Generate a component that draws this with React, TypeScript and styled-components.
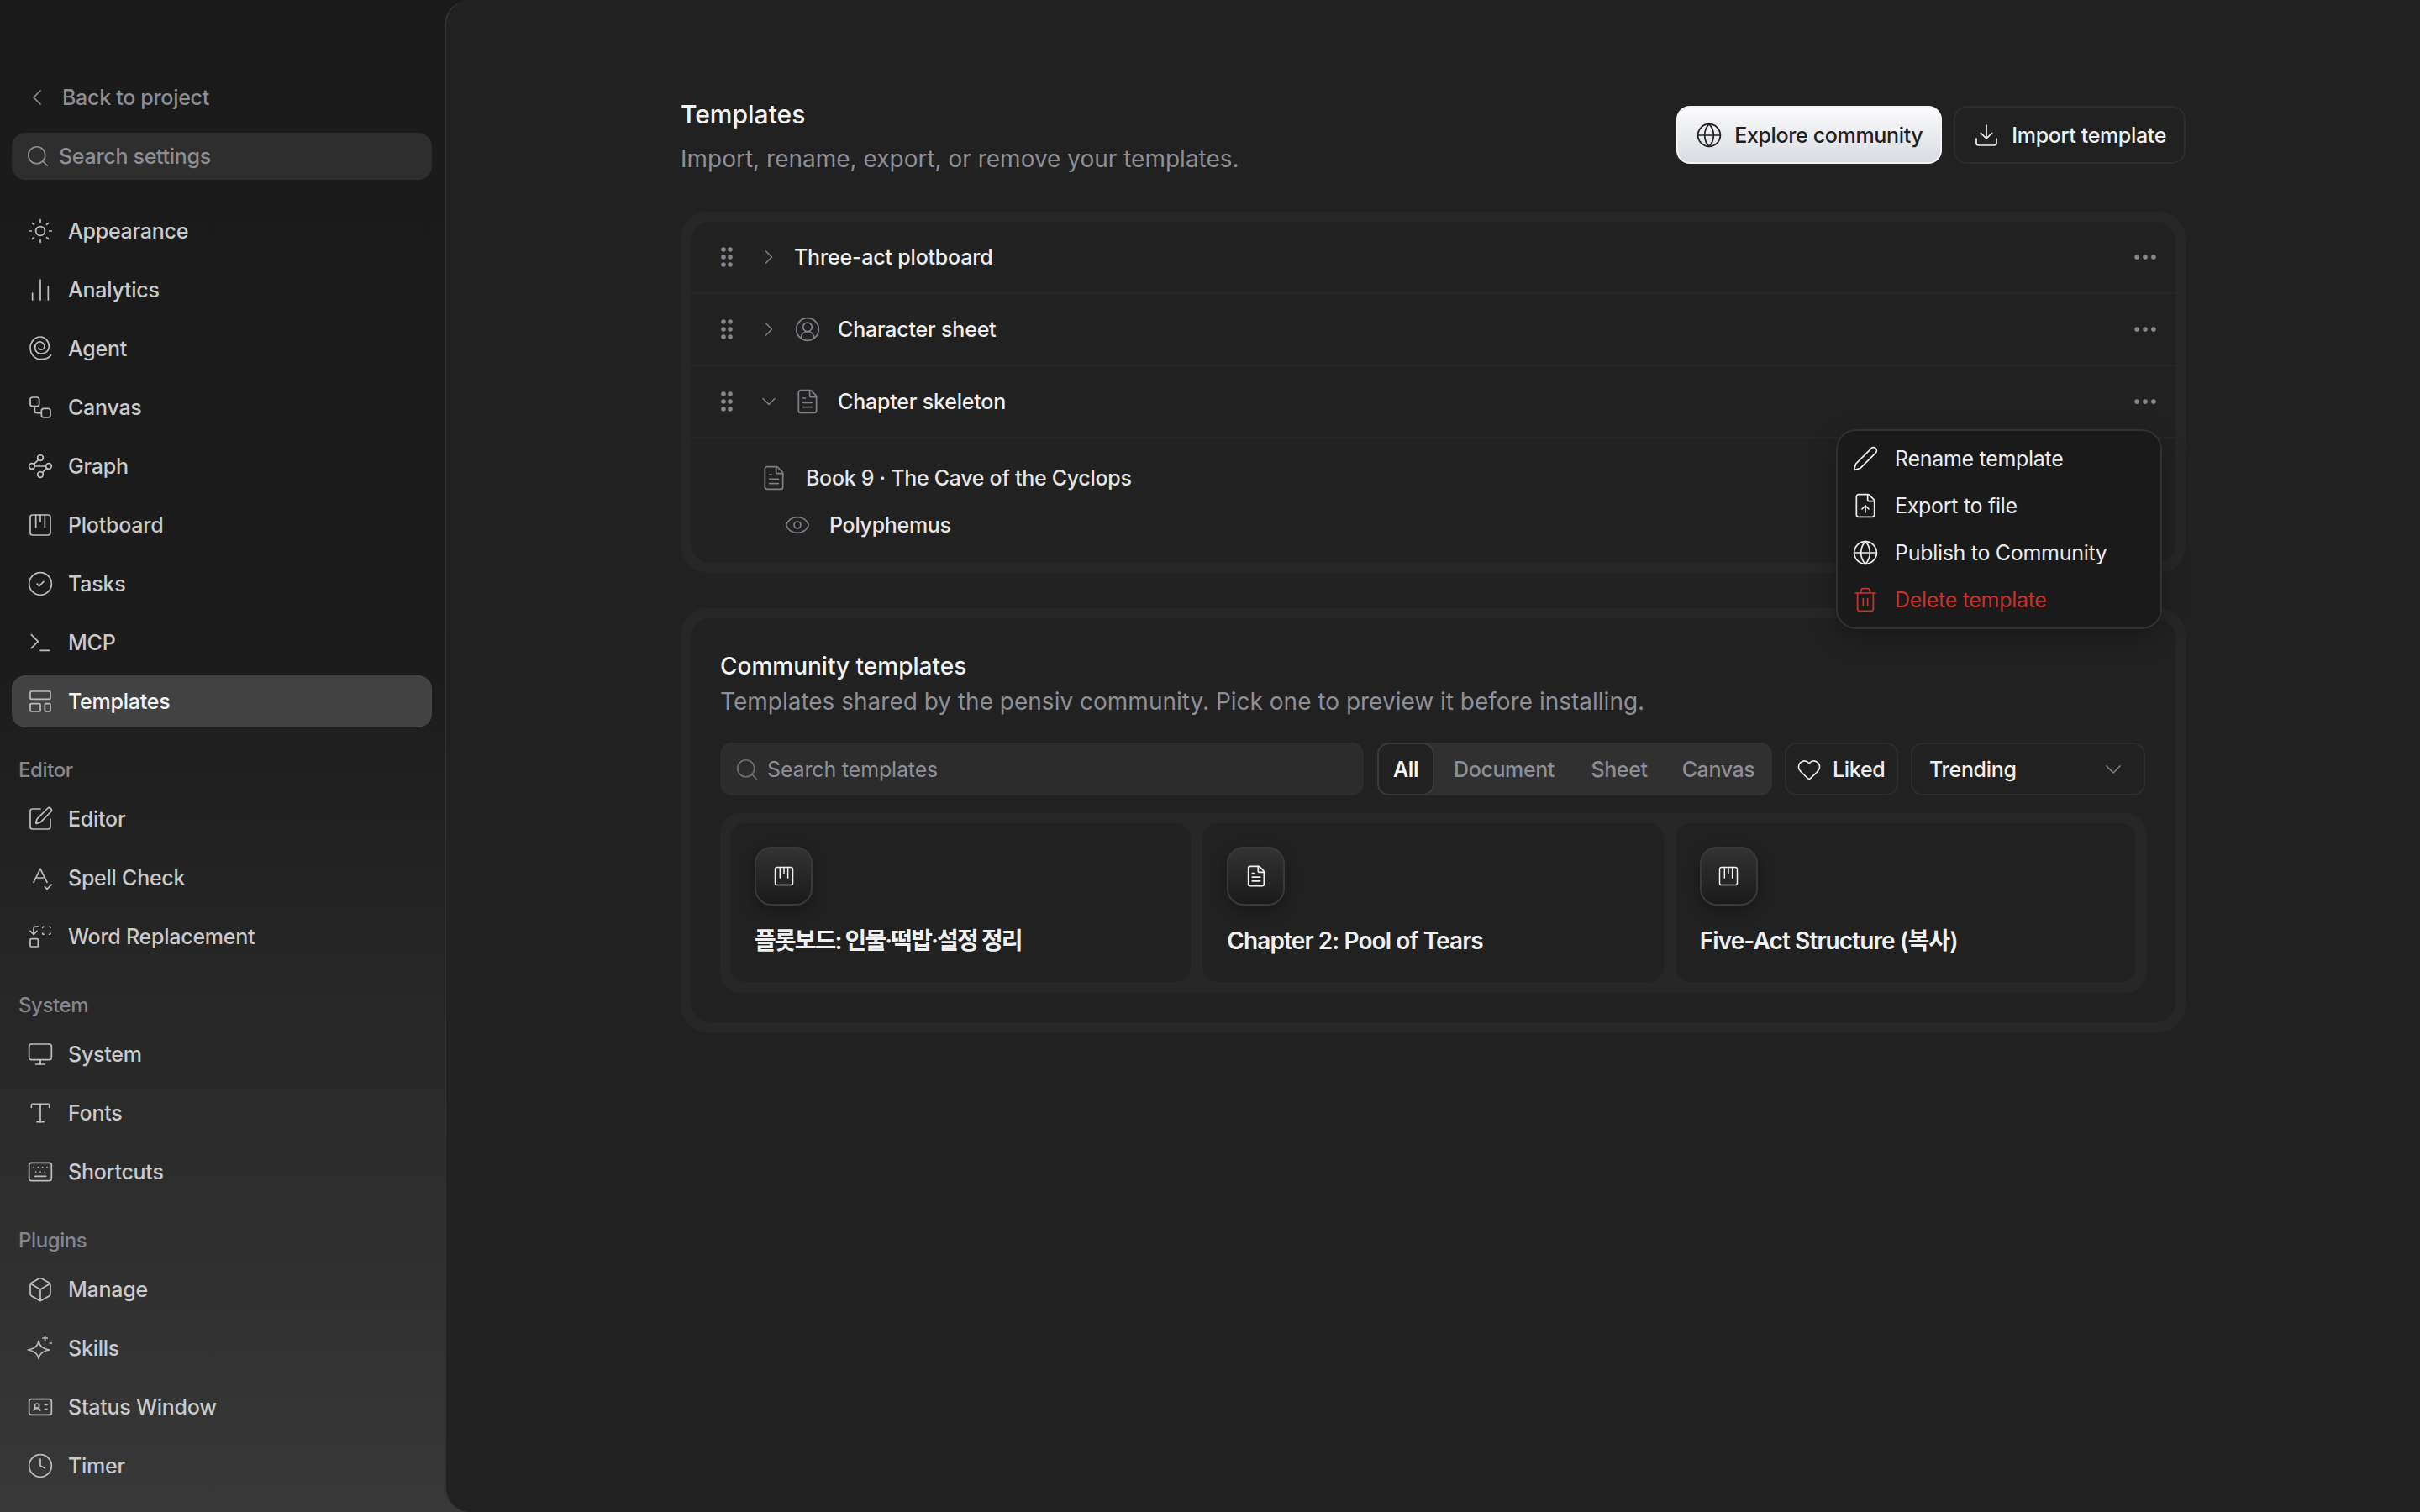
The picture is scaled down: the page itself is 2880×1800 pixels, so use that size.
import React from "react";
import styled, { createGlobalStyle } from "styled-components";
import {
  Sun, ChartNoAxesColumn, Workflow, Waypoints, CircleCheck, Terminal, LayoutTemplate, SquarePen, SpellCheck, Replace,
  Monitor, Type, Keyboard, Box, IdCard, Clock, ChevronLeft, Search, ChevronRight, ChevronDown, CircleUserRound,
  FileText, Eye, Ellipsis, Pen, FileUp, Globe, Trash2, Download, Heart, Bell,
} from "lucide-react";

const Global = createGlobalStyle`
  html, body { margin: 0; padding: 0; background: #212121; }
  body { font-family: Inter, "Noto Sans CJK KR", sans-serif; }
  * { box-sizing: border-box; }
`;

const Page = styled.div`
  width: 2880px; height: 1800px; display: flex; overflow: hidden;
  background: linear-gradient(180deg, #1a1a1a 0%, #1c1c1c 45%, #383838 100%);
`;
const Sidebar = styled.aside`
  width: 529px; flex: none; padding: 88px 15px 0 14px; display: flex; flex-direction: column; overflow: hidden;
  & > * { flex: none; }
`;
const BackRow = styled.div`
  height: 56px; display: flex; align-items: center; gap: 14px; padding-left: 14px; color: #8d8d95; font-size: 25px; font-weight: 500; letter-spacing: -0.3px;
`;
const SearchBox = styled.div`
  height: 56px; margin-top: 14px; border-radius: 16px; background: #2e2e2e; display: flex; align-items: center; gap: 10px;
  padding-left: 16px; color: #8d8d95; font-size: 25px; font-weight: 500; letter-spacing: -0.3px;
`;
const NavList = styled.div`
  display: flex; flex-direction: column; gap: 8px;
`;
const NavTop = styled(NavList)` margin-top: 30px; `;
const SectionLabel = styled.div`
  height: 32px; line-height: 32px; margin: 35px 0 11px 8px; color: #85858d; font-size: 24px; font-weight: 500; letter-spacing: -0.4px;
`;
const NavItem = styled.div<{ $active?: boolean }>`
  height: 62px; flex: none; border-radius: 16px; display: flex; align-items: center; gap: 17px; padding-left: 18px;
  font-size: 25px; font-weight: 500; letter-spacing: -0.25px;
  color: ${(p) => (p.$active ? "#f4f4f4" : "#cacaca")};
  background: ${(p) => (p.$active ? "#424242" : "transparent")};
  svg { color: #bdbdbd; flex: none; }
`;
const Main = styled.main`
  flex: 1; background: #212121; border-left: 2px solid #323238; border-radius: 30px 0 0 30px; padding: 116px 279px 0 279px; min-width: 0;
`;
const Header = styled.header`
  display: flex; justify-content: space-between; align-items: flex-start; height: 136px;
`;
const Title = styled.h1`
  margin: 0; font-size: 30px; line-height: 40px; font-weight: 500; color: #f4f4f4;
`;
const Sub = styled.p`
  margin: 13px 0 0; font-size: 28px; line-height: 40px; font-weight: 400; color: #8e8e96;
`;
const Actions = styled.div`
  display: flex; gap: 14px; margin-top: 10px;
`;
const Button = styled.div<{ $primary?: boolean }>`
  height: 69px; border-radius: 16px; display: flex; align-items: center; gap: 14px; padding: 0 21px; font-size: 25px; font-weight: 500; letter-spacing: -0.35px;
  color: ${(p) => (p.$primary ? "#1f1f24" : "#f0f0f0")};
  background: ${(p) => (p.$primary ? "linear-gradient(180deg, #fbfbfd 0%, #d9dce1 100%)" : "transparent")};
  border: 2px solid ${(p) => (p.$primary ? "#f4f4f6" : "#2b2b30")};
`;
const Shell = styled.section<{ $top?: number }>`
  position: relative; background: #262626; border-radius: 32px; padding: 12px; margin-top: ${(p) => p.$top ?? 0}px;
`;
const Inner = styled.div`
  background: #212121; border-radius: 24px;
`;
const Row = styled.div`
  height: 86px; display: flex; align-items: center; padding: 0 19px 0 36px; border-bottom: 2px solid #262626; color: #efefef; font-size: 25px; font-weight: 500; letter-spacing: -0.2px;
`;
const Grip = styled.svg` width: 14px; height: 24px; flex: none; color: #85858d; margin-right: 29px; `;
const RowChevron = styled.span`
  width: 28px; display: flex; justify-content: center; color: #7f7f87; flex: none; margin-right: 16px;
`;
const RowIcon = styled.span`
  width: 32px; display: flex; justify-content: center; color: #7f7f87; flex: none; margin-right: 20px;
`;
const RowMore = styled.span`
  margin-left: auto; color: #85858d; display: flex;
`;
const Nested = styled.div`
  padding: 19px 0 17px 83px; color: #e6e6e6; font-size: 25px; font-weight: 500; letter-spacing: -0.3px;
`;
const NestedRow = styled.div<{ $indent?: number }>`
  height: 56px; display: flex; align-items: center; gap: 22px; padding-left: ${(p) => p.$indent ?? 0}px;
  svg { color: #7f7f87; flex: none; }
`;
const Menu = styled.div`
  position: absolute; top: 259px; right: 28px; width: 388px; height: 238px; padding: 5px 0; border-radius: 24px; background: #1a1a1a;
  border: 2px solid #303030; box-shadow: 0 10px 30px rgba(0,0,0,.25); z-index: 5;
`;
const MenuItem = styled.div<{ $danger?: boolean }>`
  height: 56px; display: flex; align-items: center; gap: 19px; padding-left: 17px; font-size: 25px; font-weight: 400; letter-spacing: -0.3px;
  color: ${(p) => (p.$danger ? "#c4332d" : "#ececec")};
`;
const CommunityInner = styled(Inner)`
  padding: 37px 35px 35px;
`;
const CTitle = styled.h2`
  margin: 0; font-size: 28px; line-height: 40px; font-weight: 500; color: #f4f4f4;
`;
const CSub = styled.p`
  margin: 2px 0 0; font-size: 28px; line-height: 40px; color: #8e8e96;
`;
const Toolbar = styled.div`
  display: flex; margin-top: 29px; height: 63px; & > * { flex: none; }
`;
const TplSearch = styled.div`
  width: 766px; border-radius: 14px; background: #2c2c2c; display: flex; align-items: center; gap: 9px; padding-left: 17px;
  color: #8e8e96; font-size: 25px; letter-spacing: -0.15px; svg { color: #6e6e74; }
`;
const Segments = styled.div`
  margin-left: 16px; width: 470px; border-radius: 14px; background: #303030; display: flex; align-items: center; font-size: 25px; font-weight: 500; letter-spacing: -0.4px; color: #8e8e96;
`;
const Segment = styled.div<{ $on?: boolean; $w: number }>`
  width: ${(p) => p.$w}px; height: 100%; display: flex; align-items: center; justify-content: center; border-radius: 14px;
  ${(p) => p.$on && "background: #212121; color: #f4f4f4; border: 2px solid #383838; font-weight: 600;"}
`;
const OutlineBtn = styled.div`
  margin-left: 15px; height: 63px; width: 135px; border: 2px solid #2b2b30; border-radius: 14px; display: flex; align-items: center; gap: 13px; padding: 0 0 0 12px;
  color: #efefef; font-size: 25px; font-weight: 500; letter-spacing: -0.3px;
`;
const Select = styled(OutlineBtn)`
  width: 279px; justify-content: space-between; padding: 0 20px 0 20px; svg { color: #7f7f87; }
`;
const CardGrid = styled.div`
  margin-top: 21px; background: #262626; border-radius: 24px; padding: 12px 12px 13px; display: grid; grid-template-columns: repeat(3, 1fr); gap: 14px;
`;
const Card = styled.div`
  height: 189px; border-radius: 18px; background: #212121; padding: 28px 29px;
`;
const CardIcon = styled.div`
  width: 69px; height: 70px; border-radius: 20px; display: flex; align-items: center; justify-content: center; color: #f0f0f0;
  background: linear-gradient(180deg, #333 0%, #1a1a1a 100%); border: 2px solid #383838; box-shadow: 0 6px 18px rgba(0,0,0,.3);
`;
const CardTitle = styled.div<{ $ls: number }>`
  margin-top: 22px; line-height: 40px; font-size: 28px; font-weight: 600; color: #f0f0f0; white-space: nowrap; letter-spacing: ${(p) => p.$ls}px;
`;

const GripIcon = () => (
  <Grip viewBox="0 0 14 24" fill="currentColor">
    {[3, 12, 21].map((y) => (
      <React.Fragment key={y}>
        <circle cx="3" cy={y} r="2.8" />
        <circle cx="11" cy={y} r="2.8" />
      </React.Fragment>
    ))}
  </Grip>
);
const PlotIcon = ({ size = 32 }: { size?: number }) => (
  <svg width={size} height={size} viewBox="0 0 24 24" fill="none" stroke="currentColor" strokeWidth="1.3" strokeLinecap="round">
    <rect x="3" y="3" width="18" height="18" rx="2" />
    <path d="M8 3v11M12 3v6M16 3v11" />
  </svg>
);
const SpiralIcon = ({ size = 32 }: { size?: number }) => (
  <svg width={size} height={size} viewBox="0 0 24 24" fill="none" stroke="currentColor" strokeWidth="1.3" strokeLinecap="round">
    <path d="M10.500 11.500C11 13 13.500 13.500 15 12C16.500 10 15.500 7 12.500 6C9.500 5.500 7 8 7.250 11.500C7.500 14.500 10 16.800 13 16.500C17 16.200 20 13.500 19.800 10C19.500 5 16 1.500 12 1.500C7 1.500 3 6 3 11.500C3 17 7 21.500 12.500 21.500C16 21.500 19.500 20.500 21.500 17.800" />
  </svg>
);
const SkillIcon = ({ size = 32 }: { size?: number }) => (
  <svg width={size} height={size} viewBox="0 0 24 24" fill="none" stroke="currentColor" strokeWidth="1.3" strokeLinecap="round" strokeLinejoin="round">
    <path d="M10.500 5.500C11 9.500 13.500 12.500 20 13.500C13.500 14.500 11 17.500 10.500 21.500C10 17.500 7.500 14.500 1 13.500C7.500 12.500 10 9.500 10.500 5.500Z" />
    <path d="M16.200 1v4M14.200 3h4M20.500 7.500h1.500" />
  </svg>
);

const s = 1.3;
const I = 32;
type NavDef = [React.ReactNode, string, boolean?];
const top: NavDef[] = [
  [<Sun size={I} strokeWidth={s} />, "Appearance"],
  [<ChartNoAxesColumn size={I} strokeWidth={s} />, "Analytics"],
  [<SpiralIcon />, "Agent"],
  [<Workflow size={I} strokeWidth={s} />, "Canvas"],
  [<Waypoints size={I} strokeWidth={s} />, "Graph"],
  [<PlotIcon />, "Plotboard"],
  [<CircleCheck size={I} strokeWidth={s} />, "Tasks"],
  [<Terminal size={I} strokeWidth={s} />, "MCP"],
  [<LayoutTemplate size={I} strokeWidth={s} />, "Templates", true],
];
const sections: { label: string; items: NavDef[] }[] = [
  { label: "Editor", items: [
    [<SquarePen size={I} strokeWidth={s} />, "Editor"],
    [<SpellCheck size={I} strokeWidth={s} />, "Spell Check"],
    [<Replace size={I} strokeWidth={s} />, "Word Replacement"],
  ] },
  { label: "System", items: [
    [<Monitor size={I} strokeWidth={s} />, "System"],
    [<Type size={I} strokeWidth={s} />, "Fonts"],
    [<Keyboard size={I} strokeWidth={s} />, "Shortcuts"],
  ] },
  { label: "Plugins", items: [
    [<Box size={I} strokeWidth={s} />, "Manage"],
    [<SkillIcon />, "Skills"],
    [<IdCard size={I} strokeWidth={s} />, "Status Window"],
    [<Clock size={I} strokeWidth={s} />, "Timer"],
    [<Bell size={I} strokeWidth={s} />, ""],
  ] },
];
const renderNav = (items: NavDef[]) => items.map(([icon, label, active], i) => (
  <NavItem key={i} $active={active}>{icon}{label}</NavItem>
));

export default function App() {
  return (
    <Page>
      <Global />
      <Sidebar>
        <BackRow><ChevronLeft size={I} strokeWidth={s} />Back to project</BackRow>
        <SearchBox><Search size={30} strokeWidth={s} />Search settings</SearchBox>
        <NavTop>{renderNav(top)}</NavTop>
        {sections.map((sec) => (
          <React.Fragment key={sec.label}>
            <SectionLabel>{sec.label}</SectionLabel>
            <NavList>{renderNav(sec.items)}</NavList>
          </React.Fragment>
        ))}
      </Sidebar>
      <Main>
        <Header>
          <div>
            <Title>Templates</Title>
            <Sub>Import, rename, export, or remove your templates.</Sub>
          </div>
          <Actions>
            <Button $primary><Globe size={I} strokeWidth={s} />Explore community</Button>
            <Button><Download size={I} strokeWidth={s} />Import template</Button>
          </Actions>
        </Header>
        <Shell>
          <Inner>
            <Row>
              <GripIcon />
              <RowChevron><ChevronRight size={I} strokeWidth={s} /></RowChevron>
              Three-act plotboard
              <RowMore><Ellipsis size={34} strokeWidth={2} /></RowMore>
            </Row>
            <Row>
              <GripIcon />
              <RowChevron><ChevronRight size={I} strokeWidth={s} /></RowChevron>
              <RowIcon><CircleUserRound size={I} strokeWidth={s} /></RowIcon>
              Character sheet
              <RowMore><Ellipsis size={34} strokeWidth={2} /></RowMore>
            </Row>
            <Row>
              <GripIcon />
              <RowChevron><ChevronDown size={I} strokeWidth={s} /></RowChevron>
              <RowIcon><FileText size={I} strokeWidth={s} /></RowIcon>
              Chapter skeleton
              <RowMore><Ellipsis size={34} strokeWidth={2} /></RowMore>
            </Row>
            <Nested>
              <NestedRow><FileText size={I} strokeWidth={s} />Book 9 · The Cave of the Cyclops</NestedRow>
              <NestedRow $indent={28}><Eye size={I} strokeWidth={s} />Polyphemus</NestedRow>
            </Nested>
          </Inner>
          <Menu>
            <MenuItem><Pen size={I} strokeWidth={s} />Rename template</MenuItem>
            <MenuItem><FileUp size={I} strokeWidth={s} />Export to file</MenuItem>
            <MenuItem><Globe size={I} strokeWidth={s} />Publish to Community</MenuItem>
            <MenuItem $danger><Trash2 size={I} strokeWidth={s} />Delete template</MenuItem>
          </Menu>
        </Shell>
        <Shell $top={42}>
          <CommunityInner>
            <CTitle>Community templates</CTitle>
            <CSub>Templates shared by the pensiv community. Pick one to preview it before installing.</CSub>
            <Toolbar>
              <TplSearch><Search size={30} strokeWidth={s} />Search templates</TplSearch>
              <Segments>
                <Segment $on $w={68}>All</Segment>
                <Segment $w={166}>Document</Segment>
                <Segment $w={108}>Sheet</Segment>
                <Segment $w={128}>Canvas</Segment>
              </Segments>
              <OutlineBtn><Heart size={30} strokeWidth={s} />Liked</OutlineBtn>
              <Select>Trending<ChevronDown size={I} strokeWidth={s} /></Select>
            </Toolbar>
            <CardGrid>
              <Card><CardIcon><PlotIcon size={28} /></CardIcon><CardTitle $ls={-1.9}>플롯보드: 인물·떡밥·설정 정리</CardTitle></Card>
              <Card><CardIcon><FileText size={28} strokeWidth={1.5} /></CardIcon><CardTitle $ls={-0.9}>Chapter 2: Pool of Tears</CardTitle></Card>
              <Card><CardIcon><PlotIcon size={28} /></CardIcon><CardTitle $ls={-0.9}>Five-Act Structure (복사)</CardTitle></Card>
            </CardGrid>
          </CommunityInner>
        </Shell>
      </Main>
    </Page>
  );
}
